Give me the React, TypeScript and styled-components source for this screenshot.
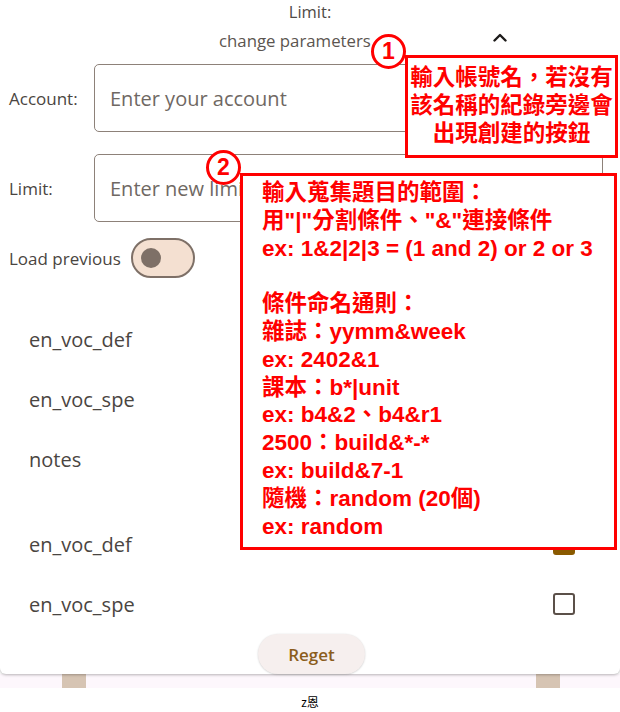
import React from 'react';
import styled, { createGlobalStyle } from 'styled-components';

const GlobalStyle = createGlobalStyle`
  html, body { margin: 0; padding: 0; background: #ffffff; }
  body {
    font-family: "Open Sans", "Noto Sans", sans-serif;
    width: 620px;
    height: 712px;
    overflow: hidden;
  }
  * { box-sizing: border-box; }
`;

const Page = styled.div`
  position: relative;
  width: 620px;
  height: 712px;
  display: flex;
  flex-direction: column;
`;

const Card = styled.section`
  background: #ffffff;
  border-radius: 0 0 6px 6px;
  box-shadow: 0 1px 3px rgba(0, 0, 0, 0.28);
  display: flex;
  flex-direction: column;
  position: relative;
  z-index: 1;
`;

const TopLine = styled.div`
  height: 24px;
  line-height: 24px;
  text-align: center;
  font-size: 16.5px;
  color: #4f4a46;
`;

const Header = styled.div`
  height: 32px;
  display: flex;
  align-items: center;
  padding: 0 113px 0 219px;
  font-size: 16.8px;
  color: #5b5550;
`;

const Chevron = styled.svg`
  margin-left: auto;
  margin-top: -6px;
  width: 14px;
  height: 9px;
`;

const Form = styled.div`
  margin-top: 8px;
  padding: 0 17px 0 9px;
  display: flex;
  flex-direction: column;
  gap: 22px;
`;

const FieldRow = styled.label`
  display: flex;
  align-items: center;
`;

const FieldLabel = styled.span`
  flex: none;
  width: 85px;
  font-size: 17px;
  color: #4a4541;
`;

const TextInput = styled.input`
  flex: 1;
  min-width: 0;
  height: 68px;
  border: 1.25px solid #8d8179;
  border-radius: 5px;
  padding: 0 15px;
  font-family: "Open Sans", "Noto Sans", sans-serif;
  font-size: 20px;
  color: #3d3935;
  background: #fff;
  outline: none;
  &::placeholder { color: #6f6863; }
`;

const ToggleRow = styled.div`
  margin-top: 16px;
  padding-left: 9px;
  display: flex;
  align-items: center;
  gap: 10px;
  font-size: 17px;
  color: #4a4541;
`;

const SwitchTrack = styled.div`
  width: 64px;
  height: 40px;
  border: 2.5px solid #7e7067;
  border-radius: 20px;
  background: #f4e0d1;
  display: flex;
  align-items: center;
  padding-left: 8px;
`;

const SwitchThumb = styled.div`
  width: 20px;
  height: 20px;
  border-radius: 50%;
  background: #7e7067;
`;

const List = styled.div`
  margin-top: 31px;
  display: flex;
  flex-direction: column;
`;

const ListItem = styled.div`
  height: 60px;
  display: flex;
  align-items: center;
  justify-content: space-between;
  padding: 0 45px 0 29px;
  font-size: 20px;
  color: #4a4541;
`;

const Spacer = styled.div`
  height: 25px;
`;

const Checkbox = styled.div<{ $checked?: boolean }>`
  width: 22px;
  height: 22px;
  border-radius: 3px;
  border: 2.5px solid ${(p) => (p.$checked ? '#8a5a00' : '#5b5049')};
  background: ${(p) => (p.$checked ? '#8a5a00' : 'transparent')};
`;

const ButtonRow = styled.div`
  display: flex;
  justify-content: center;
  padding-left: 3px;
`;

const RegetButton = styled.button`
  width: 107px;
  height: 40px;
  border-radius: 20px;
  border: none;
  background: #f6efee;
  color: #8b5d1c;
  font-family: "Open Sans", "Noto Sans", sans-serif;
  font-size: 17px;
  font-weight: 600;
  box-shadow: 0 0.5px 2px rgba(0, 0, 0, 0.2);
`;

const Strip = styled.div`
  height: 14px;
  background: #fdf7fc;
  display: flex;
  justify-content: space-between;
  padding: 0 60px 0 62px;
`;

const Tab = styled.div`
  width: 24px;
  height: 14px;
  background: #d6c4b3;
`;

const Footer = styled.div`
  flex: 1;
  padding-top: 7px;
  text-align: center;
  font-family: "Noto Sans", "Noto Sans CJK TC", sans-serif;
  font-size: 12px;
  line-height: 16px;
  color: #000;
`;

const Note = styled.div<{ $left: number; $top: number; $width: number; $height: number }>`
  position: absolute;
  z-index: 5;
  left: ${(p) => p.$left}px;
  top: ${(p) => p.$top}px;
  width: ${(p) => p.$width}px;
  height: ${(p) => p.$height}px;
  border: 3px solid #ff0000;
  background: #ffffff;
  font-family: "Liberation Sans", "Noto Sans CJK TC", sans-serif;
  font-weight: 700;
  font-size: 22.5px;
  line-height: 27.5px;
  color: #ff0000;
  white-space: nowrap;
`;

const CenteredNote = styled(Note)`
  display: flex;
  flex-direction: column;
  justify-content: center;
  align-items: center;
  padding-bottom: 1px;
`;

const ListNote = styled(Note)`
  padding: 3px 0 0 19px;
`;

const NoteLine = styled.div`
  height: 27.8px;
  line-height: 27.8px;
`;

const Badge = styled.div<{ $left: number; $top: number }>`
  position: absolute;
  z-index: 6;
  left: ${(p) => p.$left}px;
  top: ${(p) => p.$top}px;
  width: 35px;
  height: 35px;
  border-radius: 50%;
  border: 3px solid #ff0000;
  background: #ffffff;
  display: flex;
  align-items: center;
  justify-content: center;
  font-family: "Liberation Sans", sans-serif;
  font-weight: 700;
  font-size: 23px;
  color: #ff0000;
`;

const items = [
  { name: 'en_voc_def', checked: false },
  { name: 'en_voc_spe', checked: false },
  { name: 'notes', checked: false },
];
const items2 = [
  { name: 'en_voc_def', checked: true },
  { name: 'en_voc_spe', checked: false },
];

const note2 = [
  '輸入蒐集題目的範圍：',
  '用"|"分割條件、"&"連接條件',
  'ex: 1&2|2|3 = (1 and 2) or 2 or 3',
  '',
  '條件命名通則：',
  '雜誌：yymm&week',
  'ex: 2402&1',
  '課本：b*|unit',
  'ex: b4&2、b4&r1',
  '2500：build&*-*',
  'ex: build&7-1',
  '隨機：random (20個)',
  'ex: random',
];

export default function App() {
  return (
    <Page>
      <GlobalStyle />
      <Card>
        <TopLine>Limit:</TopLine>
        <Header>
          <span>change parameters</span>
          <Chevron viewBox="0 0 14 9">
            <path d="M1.5 7.5 L7 2 L12.5 7.5" fill="none" stroke="#1d1b1a" strokeWidth="2.4" strokeLinecap="round" strokeLinejoin="round" />
          </Chevron>
        </Header>
        <Form>
          <FieldRow>
            <FieldLabel>Account:</FieldLabel>
            <TextInput placeholder="Enter your account" />
          </FieldRow>
          <FieldRow>
            <FieldLabel>Limit:</FieldLabel>
            <TextInput placeholder="Enter new limit" />
          </FieldRow>
        </Form>
        <ToggleRow>
          <span>Load previous</span>
          <SwitchTrack>
            <SwitchThumb />
          </SwitchTrack>
        </ToggleRow>
        <List>
          {items.map((it) => (
            <ListItem key={it.name}>
              <span>{it.name}</span>
              <Checkbox $checked={it.checked} />
            </ListItem>
          ))}
          <Spacer />
          {items2.map((it) => (
            <ListItem key={it.name + '2'}>
              <span>{it.name}</span>
              <Checkbox $checked={it.checked} />
            </ListItem>
          ))}
        </List>
        <ButtonRow>
          <RegetButton>Reget</RegetButton>
        </ButtonRow>
      </Card>
      <Strip>
        <Tab />
        <Tab />
      </Strip>
      <Footer>z恩</Footer>

      <CenteredNote $left={405} $top={55} $width={213} $height={103}>
        <NoteLine>輸入帳號名，若沒有</NoteLine>
        <NoteLine>該名稱的紀錄旁邊會</NoteLine>
        <NoteLine>出現創建的按鈕</NoteLine>
      </CenteredNote>
      <Badge $left={371} $top={34}>1</Badge>

      <ListNote $left={240} $top={173} $width={377} $height={377}>
        {note2.map((line, i) => (
          <NoteLine key={i}>{line}</NoteLine>
        ))}
      </ListNote>
      <Badge $left={206} $top={150}>2</Badge>
    </Page>
  );
}
